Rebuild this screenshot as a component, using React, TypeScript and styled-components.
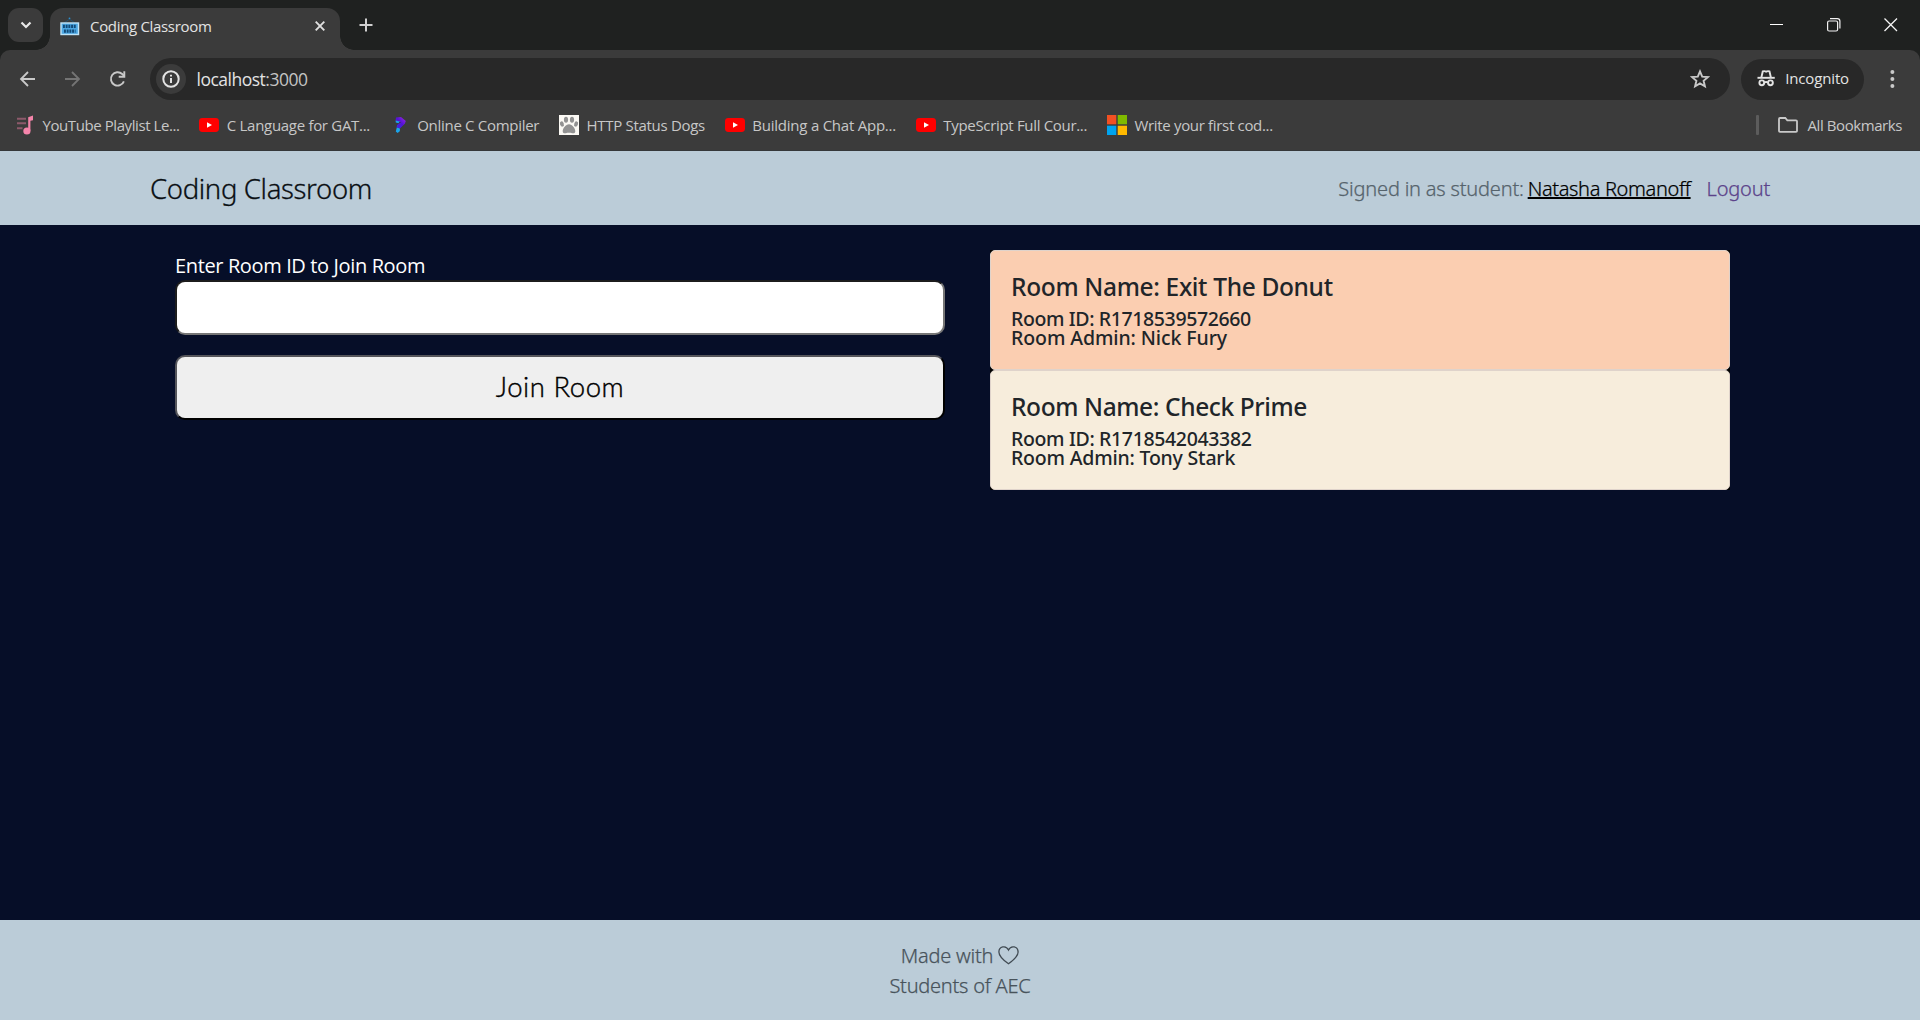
import React from "react";
import styled, { createGlobalStyle } from "styled-components";

const GlobalStyle = createGlobalStyle`
  * { box-sizing: border-box; }
  body {
    margin: 0;
    overflow: hidden;
    background: #060e28;
    font-family: "Open Sans", "Noto Sans", sans-serif;
  }
`;

const Window = styled.div`
  display: flex;
  flex-direction: column;
  width: 1920px;
  height: 1020px;
`;

const Label = styled.span<{ $track?: number }>`
  white-space: pre;
  letter-spacing: ${(p) => p.$track ?? 0}px;
`;

/* ---------- Browser frame ---------- */

const Chrome = styled.div`
  flex: none;
  height: 151px;
  background: #1f2120;
  color: #c7c7c7;
  font-size: 15px;
`;

const TabStrip = styled.div`
  display: flex;
  align-items: flex-start;
  height: 50px;
  padding: 8px 0 0 8px;
`;

const TabSearch = styled.div`
  display: grid;
  place-items: center;
  width: 35px;
  height: 34px;
  border-radius: 11px;
  background: #3b3b3b;
`;

const Tab = styled.div`
  position: relative;
  display: flex;
  align-items: center;
  width: 290px;
  height: 42px;
  margin-left: 7px;
  padding: 0 15px 7px 10px;
  border-radius: 13px 13px 0 0;
  background: #3b3b3b;
  color: #e3e3e3;

  &::before,
  &::after {
    content: "";
    position: absolute;
    bottom: 0;
    width: 14px;
    height: 14px;
  }
  &::before {
    left: -14px;
    background: radial-gradient(circle at 0 0, transparent 13.5px, #3b3b3b 14px);
  }
  &::after {
    right: -14px;
    background: radial-gradient(circle at 100% 0, transparent 13.5px, #3b3b3b 14px);
  }
`;

const TabTitle = styled(Label)`
  flex: 1;
  margin-left: 10px;
  line-height: 20px;
`;

const NewTab = styled.div`
  display: grid;
  place-items: center;
  width: 34px;
  height: 34px;
  margin-left: 9px;
`;

const WindowControls = styled.div`
  display: flex;
  align-items: center;
  gap: 43px;
  height: 34px;
  margin-left: auto;
  padding-right: 22px;
`;

const Panel = styled.div`
  height: 101px;
  border-radius: 10px 10px 0 0;
  border-bottom: 1px solid #35373a;
  background: #3b3b3b;
`;

const Toolbar = styled.div`
  display: flex;
  align-items: center;
  height: 58px;
  padding: 0 18px;
`;

const NavButtons = styled.div`
  display: flex;
  gap: 25px;
  width: 132px;
`;

const AddressBar = styled.div`
  display: flex;
  align-items: center;
  width: 1580px;
  height: 42px;
  padding: 0 20px 0 6px;
  border-radius: 21px;
  background: #282828;
  color: #e3e3e3;
  font-size: 17.5px;
`;

const SiteInfo = styled.div`
  display: grid;
  place-items: center;
  width: 30px;
  height: 30px;
  border-radius: 50%;
  background: #3b3b3b;
`;

const Url = styled(Label)`
  flex: 1;
  margin-left: 10.5px;
`;

const Port = styled.span`
  color: #c4c4c4;
`;

const IncognitoChip = styled.div`
  display: flex;
  align-items: center;
  width: 123px;
  height: 41px;
  margin-left: 11px;
  padding: 0 15px 2px 16px;
  gap: 10px;
  border-radius: 21px;
  background: #282828;
  color: #e3e3e3;
  line-height: 20px;
`;

const MenuSlot = styled.div`
  display: flex;
  margin-left: 18px;
`;

const Bookmarks = styled.div`
  display: flex;
  align-items: center;
  height: 34px;
  padding: 0 18px 0 15px;
  gap: 19.8px;
`;

const Bookmark = styled.div`
  display: flex;
  align-items: center;
  gap: 7.5px;
`;

const AllBookmarks = styled.div`
  display: flex;
  align-items: center;
  gap: 10px;
  margin-left: auto;
`;

const Divider = styled.div`
  width: 3px;
  height: 20px;
  margin-right: 9px;
  border-radius: 1px;
  background: #5c5c5c;
`;

/* ---------- Page ---------- */

const Header = styled.header`
  flex: none;
  display: flex;
  align-items: center;
  justify-content: space-between;
  height: 74px;
  padding: 0 150px;
  background: #bbccd8;
  font-family: "Noto Sans", sans-serif;
  font-weight: 300;
`;

const Brand = styled.div`
  color: #0a0f13;
  font-size: 27.5px;
  -webkit-text-stroke: 0.3px currentColor;
`;

const Account = styled.div`
  display: flex;
  align-items: center;
  font-size: 20px;
  color: #56636c;
  -webkit-text-stroke: 0.25px currentColor;
`;

const UserName = styled.span`
  margin-left: 4px;
  color: #000;
  text-decoration: underline;
  text-decoration-thickness: 2px;
  text-underline-offset: 1px;
  text-decoration-skip-ink: none;
`;

const Logout = styled.span`
  margin-left: 16px;
  color: #5b438a;
`;

const Main = styled.main`
  flex: 1;
  display: flex;
  align-items: flex-start;
  padding: 25px 190px 0 175px;
  gap: 45px;
  background: #060e28;
`;

const JoinForm = styled.div`
  display: flex;
  flex-direction: column;
  width: 770px;
`;

const FieldLabel = styled.label`
  height: 30px;
  line-height: 32px;
  color: #fff;
  font-size: 20px;
`;

const RoomInput = styled.input`
  width: 770px;
  height: 55px;
  padding: 0 10px;
  border: 2px solid;
  border-color: #1c1c1c #767676 #767676 #1c1c1c;
  border-radius: 10px;
  background: #fff;
  outline: none;
`;

const JoinButton = styled.button`
  width: 770px;
  height: 65px;
  margin-top: 20px;
  padding: 0 0 2px;
  border: 2px solid;
  border-color: #55555a #000 #000 #55555a;
  border-radius: 10px;
  background: #efefef;
  color: #000;
  font-family: Lato, "Noto Sans", sans-serif;
  font-size: 27.5px;
  font-weight: 300;
  letter-spacing: 0.55px;
  -webkit-text-stroke: 0.4px currentColor;
`;

const RoomList = styled.div`
  width: 740px;
  background: #000;
`;

const RoomCard = styled.article<{ $tone: string }>`
  height: 120px;
  padding: 21px 20px 18px;
  border: 1px solid #dfd3cb;
  border-radius: 5px;
  background: ${(p) => p.$tone};
  color: #212529;
  font-family: "Noto Sans", sans-serif;
  font-weight: 500;
`;

const RoomName = styled.h2`
  margin: 0 0 7px;
  font-size: 24.5px;
  font-weight: 500;
  line-height: 30px;
`;

const RoomLine = styled.p`
  margin: 0;
  font-size: 19.5px;
  line-height: 19px;
`;

const Footer = styled.footer`
  flex: none;
  display: flex;
  flex-direction: column;
  align-items: center;
  height: 100px;
  padding-top: 21px;
  background: #bbccd8;
  color: #48535b;
  font-family: "Noto Sans", sans-serif;
  font-size: 20px;
  font-weight: 300;
  line-height: 30px;
  -webkit-text-stroke: 0.25px currentColor;
`;

const FooterLine = styled.div`
  display: flex;
  align-items: center;
  height: 30px;
  gap: 5px;
`;

const Heart = styled.svg`
  margin-bottom: 2px;
`;

/* ---------- Icons ---------- */

const YouTubeIcon = () => (
  <svg width="20" height="20" viewBox="0 0 20 20">
    <rect x="0" y="3" width="20" height="14" rx="3.4" fill="#f00" />
    <path d="M8 7.2v5.6l5-2.8z" fill="#fff" />
  </svg>
);

const PlaylistIcon = () => (
  <svg width="20" height="20" viewBox="0 0 20 20">
    <path d="M2 3.8h9M2 8.3h9M2 13.2h5.5" stroke="#8d5a6b" strokeWidth="2" />
    <path d="M13.2 15.5V2.2L18 0.6v4.6l-2.6.6v10z" fill="#f585ab" />
    <ellipse cx="11.9" cy="15.9" rx="3.6" ry="3.5" fill="#f585ab" />
  </svg>
);

const CompilerIcon = () => (
  <svg width="20" height="20" viewBox="0 0 20 20">
    <defs>
      <linearGradient id="compiler" x1="1" y1="0" x2="0" y2="1">
        <stop offset="0" stopColor="#a32be0" />
        <stop offset=".5" stopColor="#5312d6" />
        <stop offset="1" stopColor="#3a2be8" />
      </linearGradient>
    </defs>
    <path d="M6 2.500l5-.600 4.800 4.200-1 2.700-4.600 4.400-3.600-.600.400-2.600 4-2.800L5.600 5.500z" fill="url(#compiler)" />
    <path d="M5.600 5.400l4.200 1.200-1.400 1.600-2.600-.600zM6.800 12.600l3.200.8-.2 2.800-2.200 1.800-1.800-1.400z" fill="#1ba4ea" />
  </svg>
);

const PawIcon = () => (
  <svg width="20" height="20" viewBox="0 0 20 20">
    <rect width="20" height="20" fill="#fbf9f4" />
    <g fill="#929292">
      <ellipse cx="7" cy="4.8" rx="2.1" ry="3" />
      <ellipse cx="13" cy="4.8" rx="2.1" ry="3" />
      <ellipse cx="2.9" cy="9" rx="1.9" ry="2.7" transform="rotate(-18 2.9 9)" />
      <ellipse cx="17.1" cy="9" rx="1.9" ry="2.7" transform="rotate(18 17.1 9)" />
      <path d="M10 9.200c3.200 0 6.300 4.200 6.300 7 0 2-1.900 2.400-3.300 2-1.200-.500-4.800-.500-6 0-1.400.400-3.300 0-3.300-2 0-2.800 3.100-7 6.300-7z" />
    </g>
  </svg>
);

const MicrosoftIcon = () => (
  <svg width="20" height="20" viewBox="0 0 20 20">
    <path d="M0 0h9.300v9.300H0z" fill="#f25022" />
    <path d="M10.700 0H20v9.300h-9.300z" fill="#7fba00" />
    <path d="M0 10.700h9.300V20H0z" fill="#00a4ef" />
    <path d="M10.700 10.700H20V20h-9.300z" fill="#ffb900" />
  </svg>
);

const ClassroomIcon = () => (
  <svg width="20" height="20" viewBox="0 0 20 20">
    <path d="M4 7l5.500-3.800L15 7" fill="none" stroke="#23506e" strokeWidth="1" />
    <circle cx="9.500" cy="2.300" r=".9" fill="#2d8fd0" />
    <rect x="1" y="7" width="17.500" height="11.500" fill="#4ba6e2" stroke="#bfe3f7" strokeWidth="1.400" />
    <path d="M3 10.400h13.500M4 15.200h11.500" stroke="#124a78" strokeWidth="3.200" strokeDasharray="1.900 .8" />
  </svg>
);

const bookmarks = [
  { icon: <PlaylistIcon />, text: "YouTube Playlist Le...", track: -0.42 },
  { icon: <YouTubeIcon />, text: "C Language for GAT...", track: -0.3 },
  { icon: <CompilerIcon />, text: "Online C Compiler", track: -0.3 },
  { icon: <PawIcon />, text: "HTTP Status Dogs", track: -0.29 },
  { icon: <YouTubeIcon />, text: "Building a Chat App...", track: -0.23 },
  { icon: <YouTubeIcon />, text: "TypeScript Full Cour...", track: -0.32 },
  { icon: <MicrosoftIcon />, text: "Write your first cod...", track: -0.32 },
];

const rooms = [
  {
    name: "Exit The Donut", id: "R1718539572660", admin: "Nick Fury",
    tone: "#fbceb1", tracks: [-0.34, -0.38, -0.09],
  },
  {
    name: "Check Prime", id: "R1718542043382", admin: "Tony Stark",
    tone: "#f7eddc", tracks: [-0.39, -0.35, -0.2],
  },
];

const BrowserChrome = () => (
  <Chrome>
    <TabStrip>
      <TabSearch>
        <svg width="12" height="8" viewBox="0 0 12 8" fill="none" stroke="#e8e8e8" strokeWidth="2.200">
          <path d="M1.500 1.500L6 6l4.500-4.500" />
        </svg>
      </TabSearch>
      <Tab>
        <ClassroomIcon />
        <TabTitle $track={-0.32}>Coding Classroom</TabTitle>
        <svg width="10" height="10" viewBox="0 0 10 10" stroke="#e0e0e0" strokeWidth="1.900">
          <path d="M.700.700l8.600 8.600M9.300.700L.700 9.300" />
        </svg>
      </Tab>
      <NewTab>
        <svg width="14" height="14" viewBox="0 0 14 14" stroke="#d0d0d0" strokeWidth="2">
          <path d="M7 .500v13M.500 7h13" />
        </svg>
      </NewTab>
      <WindowControls>
        <svg width="14" height="14" viewBox="0 0 14 14">
          <path d="M0 6.500h13" stroke="#fff" />
        </svg>
        <svg width="14" height="14" viewBox="0 0 14 14" fill="none" stroke="#f2f2f2" strokeWidth="1.200">
          <rect x=".6" y="3" width="10" height="10" rx="1.500" />
          <path d="M3 .700h7.300Q12.900.700 12.900 3.200v7.300" />
        </svg>
        <svg width="14" height="14" viewBox="0 0 14 14" stroke="#f5f5f5" strokeWidth="1.300">
          <path d="M.500.500l12.500 12.500M13 .500L.500 13" />
        </svg>
      </WindowControls>
    </TabStrip>
    <Panel>
      <Toolbar>
        <NavButtons>
          <svg width="20" height="20" viewBox="0 0 20 20" fill="none" stroke="#c9c9c9" strokeWidth="1.800">
            <path d="M17 10H3.500M10 3L3 10l7 7" />
          </svg>
          <svg width="20" height="20" viewBox="0 0 20 20" fill="none" stroke="#747474" strokeWidth="1.800">
            <path d="M2 10h13.500M9 3l7 7-7 7" />
          </svg>
          <svg width="20" height="20" viewBox="0 0 20 20" fill="none" stroke="#c9c9c9" strokeWidth="1.900">
            <path d="M15.900 12.300A6.700 6.700 0 1 1 14.200 5L16.200 7" />
            <path d="M16.300 2.300v5.400h-5.600" />
          </svg>
        </NavButtons>
        <AddressBar>
          <SiteInfo>
            <svg width="18" height="18" viewBox="0 0 18 18" fill="none" stroke="#e3e3e3" strokeWidth="2">
              <circle cx="9" cy="9" r="7.700" />
              <path d="M9 8v5M9 4.700v1.900" />
            </svg>
          </SiteInfo>
          <Url $track={-0.5}>
            localhost<Port>:3000</Port>
          </Url>
          <svg width="20" height="20" viewBox="0 0 20 20" fill="none" stroke="#c9c9c9" strokeWidth="1.900">
            <path d="M10 2.400l2.200 5.200 5.700.500-4.300 3.700 1.300 5.500L10 14.400l-4.900 2.900 1.300-5.500L2.100 8.100l5.700-.500z" />
          </svg>
        </AddressBar>
        <IncognitoChip>
          <svg width="19" height="18" viewBox="0 0 19 18" fill="none" stroke="#e3e3e3" strokeWidth="2">
            <path d="M.500 8.800h18" />
            <path d="M4.600 8.200L6 2.200q1.700-.800 3.500.200 1.800-1 3.500-.200l1.400 6" />
            <circle cx="5" cy="14" r="2.500" />
            <circle cx="14" cy="14" r="2.500" />
            <path d="M7.500 13.700q2-1 4 0" />
          </svg>
          <Label $track={-0.15}>Incognito</Label>
        </IncognitoChip>
        <MenuSlot>
          <svg width="20" height="20" viewBox="0 0 20 20" fill="#c9c9c9">
            <circle cx="10.400" cy="3" r="2" />
            <circle cx="10.400" cy="10" r="2" />
            <circle cx="10.400" cy="17" r="2" />
          </svg>
        </MenuSlot>
      </Toolbar>
      <Bookmarks>
        {bookmarks.map((b) => (
          <Bookmark key={b.text}>
            {b.icon}
            <Label $track={b.track}>{b.text}</Label>
          </Bookmark>
        ))}
        <AllBookmarks>
          <Divider />
          <svg width="20" height="16" viewBox="0 0 20 16" fill="none" stroke="#c9c9c9" strokeWidth="1.800">
            <path d="M1 14V2q0-1 1-1h5.300l2 2.300H18q1 0 1 1V14q0 .800-1 .800H2q-1 0-1-.800z" />
          </svg>
          <Label $track={-0.42}>All Bookmarks</Label>
        </AllBookmarks>
      </Bookmarks>
    </Panel>
  </Chrome>
);

export default function App() {
  return (
    <Window>
      <GlobalStyle />
      <BrowserChrome />
      <Header>
        <Brand>
          <Label $track={-0.35}>Coding Classroom</Label>
        </Brand>
        <Account>
          <Label $track={-0.2}>Signed in as student:</Label>
          <UserName>
            <Label $track={-0.35}>Natasha Romanoff</Label>
          </UserName>
          <Logout>
            <Label $track={-0.2}>Logout</Label>
          </Logout>
        </Account>
      </Header>
      <Main>
        <JoinForm>
          <FieldLabel htmlFor="room">
            <Label $track={-0.37}>Enter Room ID to Join Room</Label>
          </FieldLabel>
          <RoomInput id="room" />
          <JoinButton>Join Room</JoinButton>
        </JoinForm>
        <RoomList>
          {rooms.map((r) => (
            <RoomCard key={r.id} $tone={r.tone}>
              <RoomName>
                <Label $track={r.tracks[0]}>{`Room Name: ${r.name}`}</Label>
              </RoomName>
              <RoomLine>
                <Label $track={r.tracks[1]}>{`Room ID: ${r.id}`}</Label>
              </RoomLine>
              <RoomLine>
                <Label $track={r.tracks[2]}>{`Room Admin: ${r.admin}`}</Label>
              </RoomLine>
            </RoomCard>
          ))}
        </RoomList>
      </Main>
      <Footer>
        <FooterLine>
          <Label $track={-0.2}>Made with</Label>
          <Heart width="21" height="19" viewBox="0 0 21 19" fill="none" stroke="#414b53" strokeWidth="1.300">
            <path d="M10.500 17.800C4.500 13.600.900 10 .900 6c0-5.500 7-7.200 9.600-2 2.600-5.200 9.600-3.500 9.600 2 0 4-3.600 7.600-9.600 11.800z" />
          </Heart>
        </FooterLine>
        <FooterLine>
          <Label $track={-0.25}>Students of AEC</Label>
        </FooterLine>
      </Footer>
    </Window>
  );
}
